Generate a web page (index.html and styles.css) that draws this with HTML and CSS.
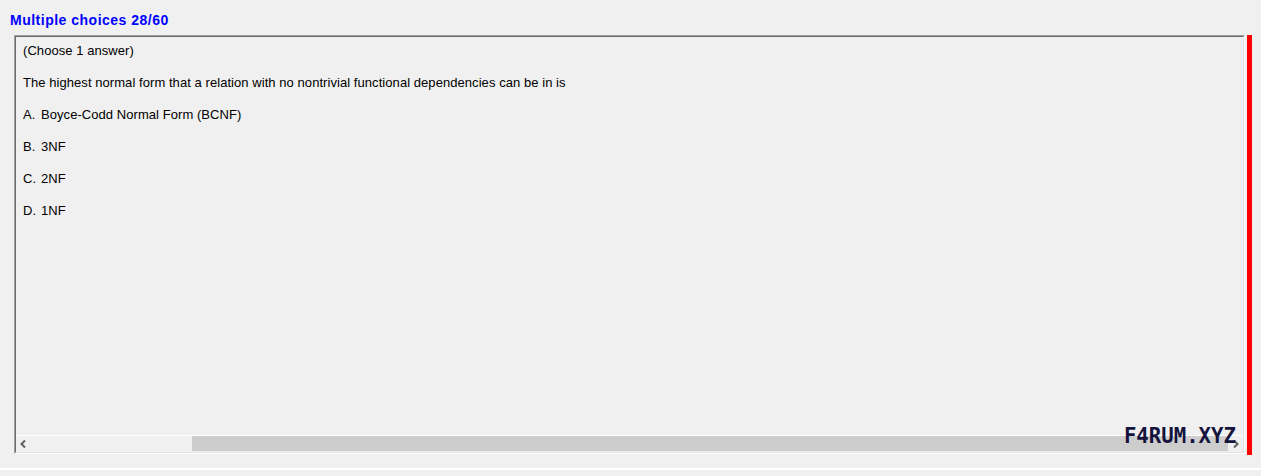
FILE: index.html
```html
<!DOCTYPE html>
<html>
<head>
<meta charset="utf-8">
<link rel="stylesheet" href="styles.css">
</head>
<body>
<div class="page">
  <div class="title">Multiple choices 28/60</div>
  <div class="main">
    <div class="box">
      <div class="inner">
        <div class="content">
          <p class="line">(Choose 1 answer)</p>
          <p class="line">The highest normal form that a relation with no nontrivial functional dependencies can be in is</p>
          <p class="line"><span class="key">A.</span>Boyce-Codd Normal Form (BCNF)</p>
          <p class="line"><span class="key">B.</span>3NF</p>
          <p class="line"><span class="key">C.</span>2NF</p>
          <p class="line"><span class="key">D.</span>1NF</p>
        </div>
        <div class="hscroll">
          <div class="arrow-btn left">
            <svg width="7" height="8" viewBox="0 0 7 8"><path d="M5 0.5 L1.5 4 L5 7.5" fill="none" stroke="#606060" stroke-width="2"/></svg>
          </div>
          <div class="track">
            <div class="thumb"></div>
          </div>
          <div class="arrow-btn right">
            <svg width="7" height="8" viewBox="0 0 7 8"><path d="M2 0.5 L5.5 4 L2 7.5" fill="none" stroke="#606060" stroke-width="2"/></svg>
          </div>
        </div>
        <div class="watermark">F4RUM.XYZ</div>
      </div>
    </div>
    <div class="redbar"></div>
  </div>
  <div class="bottom-line"></div>
</div>
</body>
</html>
```

FILE: styles.css
```css
html, body {
  margin: 0;
  padding: 0;
  background: #f0f0f0;
}
body {
  font-family: "Liberation Sans", Arial, sans-serif;
  color: #000;
  width: 1261px;
  height: 476px;
  overflow: hidden;
}
.page {
  display: flex;
  flex-direction: column;
}
.title {
  height: 35px;
  box-sizing: border-box;
  padding: 12px 0 0 10px;
  font-size: 14px;
  letter-spacing: 0.5px;
  font-weight: bold;
  color: #0000ff;
  line-height: 17px;
}
.main {
  display: flex;
  align-items: flex-start;
  padding-left: 14px;
  gap: 1px;
}
.box {
  width: 1231px;
  height: 419px;
  box-sizing: border-box;
  border-top: 1px solid #a0a0a0;
  border-left: 1px solid #a0a0a0;
  border-right: 1px solid #ffffff;
  border-bottom: 1px solid #ffffff;
}
.inner {
  position: relative;
  height: 100%;
  box-sizing: border-box;
  border-top: 1px solid #696969;
  border-left: 1px solid #696969;
  border-right: 1px solid #e3e3e3;
  border-bottom: 1px solid #e3e3e3;
  display: flex;
  flex-direction: column;
}
.content {
  flex: 1;
  padding: 6px 0 0 7px;
  font-size: 13px;
  letter-spacing: 0.06px;
}
.line {
  margin: 0 0 16px 0;
  line-height: 16px;
  white-space: nowrap;
}
.key {
  display: inline-block;
  width: 18px;
}
.hscroll {
  height: 17px;
  box-sizing: border-box;
  border-top: 1px solid #ffffff;
  display: flex;
  background: #f0f0f0;
}
.arrow-btn {
  width: 16px;
  display: flex;
  align-items: center;
  justify-content: center;
}
.arrow-btn.left {
  width: 16px;
  justify-content: flex-start;
  padding-left: 4px;
  box-sizing: border-box;
}
.arrow-btn.right {
  width: 15px;
  justify-content: flex-start;
  padding-left: 4px;
  box-sizing: border-box;
}
.track {
  flex: 1;
  display: flex;
  padding-left: 160px;
}
.thumb {
  flex: 1;
  background: #cdcdcd;
  height: 15px;
}
.watermark {
  position: absolute;
  right: 7px;
  bottom: 6px;
  font-family: "DejaVu Sans Mono", monospace;
  font-weight: bold;
  font-size: 20.7px;
  line-height: 20px;
  color: #14143e;
}
.redbar {
  width: 5px;
  height: 420px;
  background: #ff0000;
  margin-left: 1px;
}
.bottom-line {
  margin-top: 13px;
  height: 2px;
  background: #ffffff;
}
```
